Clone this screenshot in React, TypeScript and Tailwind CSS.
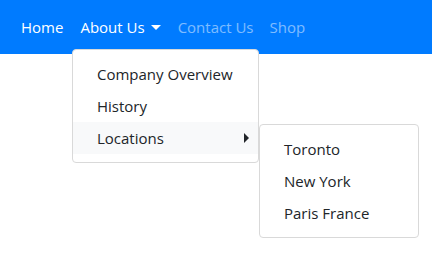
export default function App() {
  return (
    <div className="relative min-h-[270px] w-full bg-white font-['Open_Sans',sans-serif] text-[15px] whitespace-nowrap">
      {/* Navbar */}
      <nav className="h-[54px] w-full bg-[#007bff] flex items-center pl-[13px]">
        <ul className="flex items-center">
          <li className="px-2 text-white">Home</li>
          <li className="px-2 ml-[1px] text-white flex items-center">
            About Us
            <span className="ml-[6px] inline-block w-0 h-0 border-l-[5px] border-r-[5px] border-t-[5px] border-l-transparent border-r-transparent border-t-white" />
          </li>
          <li className="px-2 ml-[1px] text-white/50">Contact Us</li>
          <li className="px-2 text-white/50">Shop</li>
        </ul>
      </nav>

      {/* Dropdown */}
      <div className="absolute left-[72px] top-[49px] w-[187px] bg-white border border-[#d9d9d9] rounded py-2 text-[#212529]">
        <div className="px-6 h-8 flex items-center">Company Overview</div>
        <div className="px-6 h-8 flex items-center">History</div>
        <div className="relative pl-6 pr-[9px] h-8 flex items-center justify-between bg-[#f8f9fa]">
          Locations
          <span className="inline-block w-0 h-0 border-t-[5px] border-b-[5px] border-l-[5px] border-t-transparent border-b-transparent border-l-[#212529]" />

          {/* Submenu */}
          <div className="absolute left-[186px] top-[2px] w-[160px] bg-white border border-[#d9d9d9] rounded py-2">
            <div className="px-6 h-8 flex items-center">Toronto</div>
            <div className="px-6 h-8 flex items-center">New York</div>
            <div className="px-6 h-8 flex items-center">Paris France</div>
          </div>
        </div>
      </div>
    </div>
  );
}
